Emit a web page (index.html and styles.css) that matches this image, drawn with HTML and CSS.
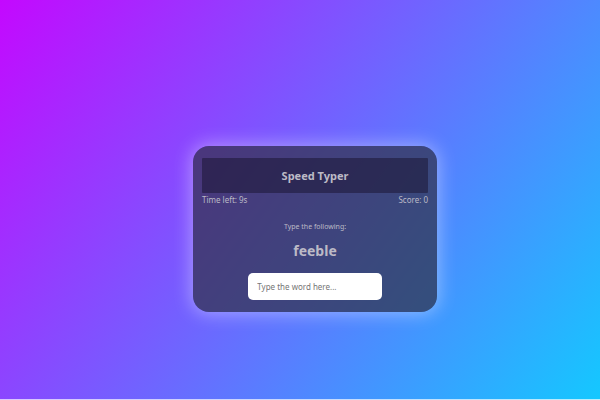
FILE: index.html
```html
<!DOCTYPE html>
<html lang="en">
<head>
<meta charset="utf-8">
<meta name="viewport" content="width=device-width, initial-scale=1">
<title>Speed Typer</title>
<link rel="stylesheet" href="styles.css">
</head>
<body>
<main class="card">
  <h1 class="title">Speed Typer</h1>
  <div class="stats">
    <span>Time left: 9s</span>
    <span>Score: 0</span>
  </div>
  <label class="prompt" for="word-input">Type the following:</label>
  <p class="word">feeble</p>
  <input class="entry" id="word-input" type="text" placeholder="Type the word here..." autocomplete="off">
</main>
</body>
</html>
```

FILE: styles.css
```css
* {
  box-sizing: border-box;
}

body {
  margin: 0;
  min-height: 100vh;
  padding-top: 58px;
  padding-left: 30px;
  display: flex;
  align-items: center;
  justify-content: center;
  background: linear-gradient(126deg, #c408ff, #14c8ff);
  border-bottom: 1px solid #ffffffb0;
  font-family: "Noto Sans", sans-serif;
  color: #bcbac6;
}

.card {
  width: 41%;
  min-width: 244px;
  padding: 12px 9px;
  display: flex;
  flex-direction: column;
  align-items: center;
  border-radius: 16px;
  background: rgba(46, 46, 64, 0.68);
  box-shadow: 0 0 18px 2px rgba(255, 255, 255, 0.38);
}

.title {
  align-self: stretch;
  margin: 0;
  border-radius: 1px;
  background: rgba(28, 22, 52, 0.55);
  font-size: 11px;
  line-height: 35px;
  text-align: center;
}

.stats {
  align-self: stretch;
  display: flex;
  justify-content: space-between;
  font-size: 8px;
  line-height: 14px;
}

.prompt {
  margin-top: 14px;
  font-size: 7px;
  line-height: 12px;
}

.word {
  margin: 6px 0 10px;
  font-size: 14px;
  font-weight: 700;
  line-height: 24px;
}

.entry {
  width: 59%;
  height: 27px;
  padding: 0 9px;
  border: 0;
  border-radius: 5px;
  background: #fff;
  color: #444;
  font-family: inherit;
  font-size: 8px;
}

.entry::placeholder {
  color: #757575;
}
```
